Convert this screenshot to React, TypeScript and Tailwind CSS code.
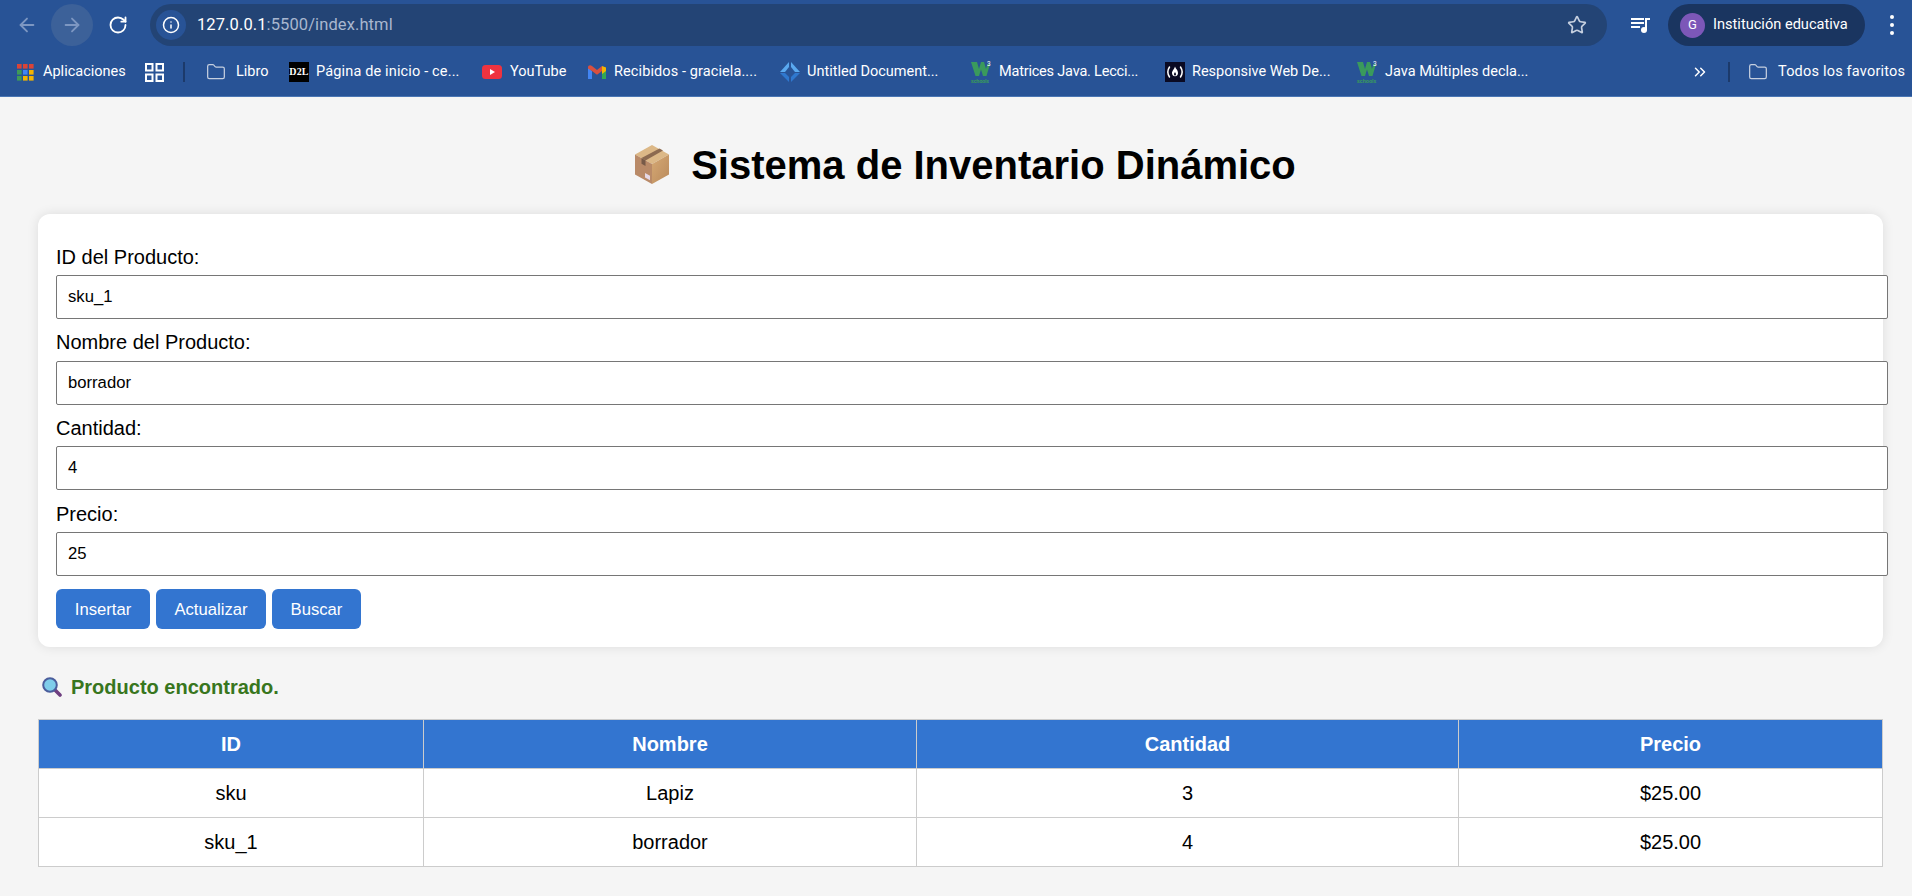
import { ArrowLeft, ArrowRight, RotateCw, Info, Star, ChevronsRight, Folder } from 'lucide-react';

const rows = [
  { id: 'sku', nombre: 'Lapiz', cantidad: '3', precio: '$25.00' },
  { id: 'sku_1', nombre: 'borrador', cantidad: '4', precio: '$25.00' },
];

const fields = [
  { label: 'ID del Producto:', value: 'sku_1', labelClass: 'pt-[12px] pb-[6px]' },
  { label: 'Nombre del Producto:', value: 'borrador', labelClass: 'pt-[11px] pb-[7px]' },
  { label: 'Cantidad:', value: '4', labelClass: 'pt-[11px] pb-[6px]' },
  { label: 'Precio:', value: '25', labelClass: 'pt-[12px] pb-[6px]' },
];

function AppsIcon() {
  const colors = ['#db4437', '#db4437', '#db4437', '#3f9a58', '#4285f4', '#f4b400', '#3f9a58', '#f4b400', '#f4b400'];
  return (
    <svg width="17" height="17" viewBox="0 0 17 17">
      {colors.map((c, i) => (
        <rect key={i} x={(i % 3) * 6} y={Math.floor(i / 3) * 6} width="4.6" height="4.6" fill={c} />
      ))}
    </svg>
  );
}

function GridIcon() {
  return (
    <svg width="19" height="19" viewBox="0 0 19 19" fill="none" stroke="#ffffff" strokeWidth="2">
      <rect x="1" y="1" width="6.5" height="6.5" />
      <rect x="11.5" y="1" width="6.5" height="6.5" />
      <rect x="1" y="11.5" width="6.5" height="6.5" />
      <rect x="11.5" y="11.5" width="6.5" height="6.5" />
    </svg>
  );
}

function YouTubeIcon() {
  return (
    <svg width="20" height="14" viewBox="0 0 20 14">
      <rect width="20" height="14" rx="3.5" fill="#ee3340" />
      <path d="M8 4l5 3-5 3z" fill="#ffffff" />
    </svg>
  );
}

function GmailIcon() {
  return (
    <svg width="18" height="14" viewBox="0 0 18 14">
      <path d="M0 2.5V14h4V6z" fill="#4285f4" />
      <path d="M18 2.5V14h-4V6z" fill="#34a853" />
      <path d="M14 1l4 1.5V6l-4 3z" fill="#f4b400" />
      <path d="M0 2.5C0 .5 2 -.5 4 1l5 4 5-4v5L9 9.8 4 6 0 3.5z" fill="#d8503f" />
    </svg>
  );
}

function D2LIcon() {
  return (
    <div className="w-5 h-5 bg-black flex items-center justify-center text-white text-[10px] font-bold font-['Liberation_Serif',serif] leading-none">
      D2L
    </div>
  );
}

function DiamondIcon() {
  return (
    <svg width="20" height="20" viewBox="0 0 20 20">
      <path d="M9 0v5L5 10H0z" fill="#5aa9f0" />
      <path d="M11 0v5l4 5h5z" fill="#5aa9f0" />
      <path d="M9 20v-5l-4-4H0z" fill="#2f78cf" />
      <path d="M11 20v-5l4-4h5z" fill="#2f78cf" />
    </svg>
  );
}

function W3Icon() {
  return (
    <svg width="20" height="24" viewBox="0 0 20 24">
      <path d="M0 2h6l2 7 2-7h3l2 7 1.500-5H19l-3.500 12H12l-2-6.500L8 16H4.500z" fill="#3a9a5c" />
      <text x="16" y="5.500" fontSize="6.500" fill="#ffffff" fontFamily="Roboto, sans-serif">3</text>
      <text x="0" y="23" fontSize="5.500" fontWeight="700" fill="#3a9a5c" fontFamily="Roboto, sans-serif">schools</text>
    </svg>
  );
}

function FccIcon() {
  return (
    <svg width="20" height="20" viewBox="0 0 20 20">
      <rect width="20" height="20" fill="#0a0a23" />
      <path d="M4.500 5C2.500 8 2.500 12 4.500 15M15.500 5c2 3 2 7 0 10" fill="none" stroke="#ffffff" strokeWidth="1.500" strokeLinecap="round" />
      <path d="M10 4.500c.8 2.500 3 3.500 3 6.500 0 1.800-1 3-3 3.300-2-.3-3-1.500-3-3.300 0-2 1.800-3 3-6.500z" fill="#ffffff" />
      <path d="M10 10c.6 1 1 1.500 1 2.300 0 .8-.5 1.200-1 1.300-.5-.1-1-.5-1-1.300 0-.8.400-1.300 1-2.300z" fill="#0a0a23" />
    </svg>
  );
}

function QueueIcon() {
  return (
    <svg width="20" height="18" viewBox="0 0 20 18" fill="#ffffff">
      <rect x="0" y="2" width="13" height="2" />
      <rect x="0" y="6" width="13" height="2" />
      <rect x="0" y="10" width="9" height="2" />
      <rect x="14" y="2" width="2" height="12" />
      <rect x="14" y="2" width="5" height="2" />
      <circle cx="13" cy="14" r="3" />
    </svg>
  );
}

function BoxEmoji() {
  return (
    <svg width="34" height="39" viewBox="0 0 34 39">
      <defs>
        <linearGradient id="boxRight" x1="0" y1="0" x2="1" y2="1">
          <stop offset="0" stopColor="#d6a974" />
          <stop offset="1" stopColor="#b98a5c" />
        </linearGradient>
      </defs>
      <path d="M17 0l17 9.500L17 19 0 9.500z" fill="#dcb887" />
      <path d="M0 9.500L17 19v20L0 29.500z" fill="#b98a68" />
      <path d="M34 9.500L17 19v20l17-9.500z" fill="url(#boxRight)" />
      <path d="M6.500 13l18-9.500 3.500 2-17.500 10z" fill="#8c6a50" />
      <path d="M6.500 13l4 2.500v5.500l-4-2.300z" fill="#775a48" />
      <path d="M10 28l5 2.800v4.500l-5-2.800z" fill="#e6d9e6" />
    </svg>
  );
}

function SearchEmoji() {
  return (
    <svg width="20" height="20" viewBox="0 0 20 20">
      <path d="M12.500 12.500l5.500 5.500" stroke="#6f3f80" strokeWidth="3.600" strokeLinecap="round" />
      <circle cx="8" cy="8" r="6.800" fill="#7fcdea" stroke="#4a5d9c" strokeWidth="2" />
    </svg>
  );
}

function Bookmark({ children, label, className }: { children?: React.ReactNode; label: string; className: string }) {
  return (
    <div className={`flex items-center shrink-0 ${className}`}>
      {children}
      <span className="whitespace-nowrap">{label}</span>
    </div>
  );
}

export default function App() {
  return (
    <div className="min-h-[896px] bg-[#f5f5f5] font-['Liberation_Sans',Arial,sans-serif] text-black overflow-hidden">
      <div className="h-[97px] bg-[#285396] border-b border-[#4a76b4] font-['Roboto',sans-serif] text-white">
        <div className="h-[50px] flex items-center">
          <div className="w-[51px] flex justify-end pr-[13px]">
            <ArrowLeft size={22} className="text-[#7d97c2]" />
          </div>
          <div className="w-[42px] h-[42px] rounded-full bg-[#3c6199] flex items-center justify-center">
            <ArrowRight size={22} className="text-[#7d97c2]" />
          </div>
          <div className="w-[42px] ml-[4px] flex justify-center">
            <RotateCw size={20} className="text-white" strokeWidth={2.2} />
          </div>
          <div className="ml-[11px] w-[1457px] h-[42px] rounded-full bg-[#234475] flex items-center pl-[6px] pr-[20px]">
            <div className="w-[30px] h-[30px] rounded-full bg-[#285396] flex items-center justify-center">
              <Info size={18} className="text-white" />
            </div>
            <div className="ml-[11px] text-[16.500px] tracking-[0.1px] text-[#a9b7cf]">
              <span className="text-white">127.0.0.1</span>:5500/index.html
            </div>
            <Star size={20} className="ml-auto text-[#c5cfdf]" />
          </div>
          <div className="ml-[24px]">
            <QueueIcon />
          </div>
          <div className="ml-[17px] w-[197px] h-[42px] rounded-full bg-[#1a3560] flex items-center pl-[12px]">
            <div className="w-[25px] h-[25px] rounded-full bg-[#7c57b8] flex items-center justify-center text-[13px]">G</div>
            <div className="ml-[8px] text-[14.600px] whitespace-nowrap">Institución educativa</div>
          </div>
          <div className="ml-[25px] flex flex-col gap-[4px]">
            <div className="w-[4px] h-[4px] rounded-full bg-white" />
            <div className="w-[4px] h-[4px] rounded-full bg-white" />
            <div className="w-[4px] h-[4px] rounded-full bg-white" />
          </div>
        </div>
        <div className="h-[44px] flex items-center text-[14.500px] pl-[17px]">
          <Bookmark label="Aplicaciones" className="w-[128px] gap-[9px]"><AppsIcon /></Bookmark>
          <GridIcon />
          <div className="ml-[19px] w-[2px] h-[20px] bg-[#1c3a6b]" />
          <Bookmark label="Libro" className="ml-[21px] w-[83px] gap-[10px]"><Folder size={20} strokeWidth={1.500} className="text-[#c5cfdf]" /></Bookmark>
          <Bookmark label="Página de inicio - ce..." className="w-[193px] gap-[7px] tracking-[0.15px]"><D2LIcon /></Bookmark>
          <Bookmark label="YouTube" className="w-[106px] gap-[8px]"><YouTubeIcon /></Bookmark>
          <Bookmark label="Recibidos - graciela...." className="w-[192px] gap-[8px] tracking-[0.1px]"><GmailIcon /></Bookmark>
          <Bookmark label="Untitled Document..." className="w-[191px] gap-[7px]"><DiamondIcon /></Bookmark>
          <Bookmark label="Matrices Java. Lecci..." className="w-[194px] gap-[8px] tracking-[-0.2px]"><W3Icon /></Bookmark>
          <Bookmark label="Responsive Web De..." className="w-[192px] gap-[7px]"><FccIcon /></Bookmark>
          <Bookmark label="Java Múltiples decla..." className="w-[334px] gap-[8px]"><W3Icon /></Bookmark>
          <ChevronsRight size={18} className="text-white" />
          <div className="ml-[19px] w-[2px] h-[20px] bg-[#1c3a6b]" />
          <Bookmark label="Todos los favoritos" className="ml-[18px] gap-[10px] tracking-[0.2px]"><Folder size={20} strokeWidth={1.500} className="text-[#c5cfdf]" /></Bookmark>
        </div>
      </div>

      <div className="pl-[38px] pr-[29px]">
        <h1 className="h-[117px] pt-[18px] pl-[10px] flex items-center justify-center gap-[22px] text-[40px] font-bold">
          <BoxEmoji />
          <span>Sistema de Inventario Dinámico</span>
        </h1>

        <div className="bg-white rounded-[12px] shadow-[0_0_12px_rgba(0,0,0,0.1)] pt-[19px] pb-[18px] pl-[18px] pr-[18px]">
          {fields.map((field) => (
            <div key={field.label}>
              <div className={`${field.labelClass} text-[20px] leading-[24px]`}>{field.label}</div>
              <div className="w-[1832px] h-[44px] border border-[#767676] rounded-[2px] bg-white flex items-center pl-[11px] pb-[2px] text-[16.670px]">
                {field.value}
              </div>
            </div>
          ))}
          <div className="mt-[13px] flex gap-[6px]">
            <button className="w-[94px] h-[40px] rounded-[6px] bg-[#3375d0] text-white text-[16.670px]">Insertar</button>
            <button className="w-[110px] h-[40px] rounded-[6px] bg-[#3375d0] text-white text-[16.670px]">Actualizar</button>
            <button className="w-[89px] h-[40px] rounded-[6px] bg-[#3375d0] text-white text-[16.670px]">Buscar</button>
          </div>
        </div>

        <div className="mt-[28px] mb-[20px] h-[24px] pl-[4px] flex items-center gap-[9px] text-[20px] font-bold text-[#38761d]">
          <SearchEmoji />
          <span>Producto encontrado.</span>
        </div>

        <table className="w-[1845px] table-fixed border-collapse text-[20px] bg-white">
          <thead>
            <tr className="h-[49px] bg-[#3375d0] text-white">
              <th className="w-[385px] border border-[#cccccc] font-bold">ID</th>
              <th className="w-[493px] border border-[#cccccc] font-bold">Nombre</th>
              <th className="w-[542px] border border-[#cccccc] font-bold">Cantidad</th>
              <th className="border border-[#cccccc] font-bold">Precio</th>
            </tr>
          </thead>
          <tbody>
            {rows.map((row) => (
              <tr key={row.id} className="h-[49px]">
                <td className="border border-[#cccccc] text-center">{row.id}</td>
                <td className="border border-[#cccccc] text-center">{row.nombre}</td>
                <td className="border border-[#cccccc] text-center">{row.cantidad}</td>
                <td className="border border-[#cccccc] text-center">{row.precio}</td>
              </tr>
            ))}
          </tbody>
        </table>
      </div>
    </div>
  );
}
